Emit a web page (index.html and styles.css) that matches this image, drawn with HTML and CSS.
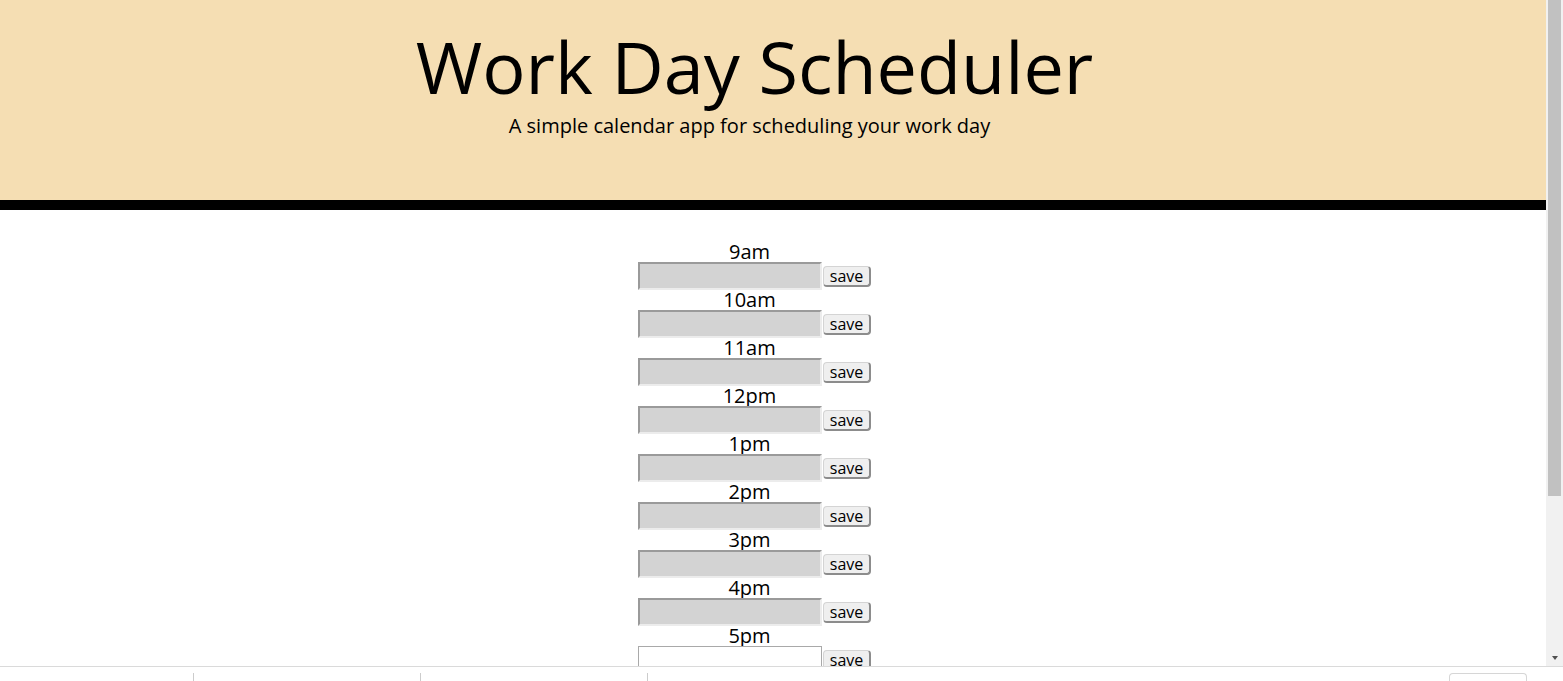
FILE: index.html
```html
<!DOCTYPE html>
<html lang="en">
<head>
<meta charset="utf-8">
<title>Work Day Scheduler</title>
<link rel="stylesheet" href="styles.css">
</head>
<body>
<div class="window">
  <div class="viewport">
    <div class="content">
      <header class="jumbotron">
        <h1 class="title">Work Day Scheduler</h1>
        <p class="lead">A simple calendar app for scheduling your work day</p>
      </header>
      <main class="schedule">
        <div class="hour-block">
          <div class="hour">9am</div>
          <div class="row"><input class="task past" type="text"><button class="save">save</button></div>
        </div>
        <div class="hour-block">
          <div class="hour">10am</div>
          <div class="row"><input class="task past" type="text"><button class="save">save</button></div>
        </div>
        <div class="hour-block">
          <div class="hour">11am</div>
          <div class="row"><input class="task past" type="text"><button class="save">save</button></div>
        </div>
        <div class="hour-block">
          <div class="hour">12pm</div>
          <div class="row"><input class="task past" type="text"><button class="save">save</button></div>
        </div>
        <div class="hour-block">
          <div class="hour">1pm</div>
          <div class="row"><input class="task past" type="text"><button class="save">save</button></div>
        </div>
        <div class="hour-block">
          <div class="hour">2pm</div>
          <div class="row"><input class="task past" type="text"><button class="save">save</button></div>
        </div>
        <div class="hour-block">
          <div class="hour">3pm</div>
          <div class="row"><input class="task past" type="text"><button class="save">save</button></div>
        </div>
        <div class="hour-block">
          <div class="hour">4pm</div>
          <div class="row"><input class="task past" type="text"><button class="save">save</button></div>
        </div>
        <div class="hour-block">
          <div class="hour">5pm</div>
          <div class="row"><input class="task future" type="text"><button class="save">save</button></div>
        </div>
      </main>
    </div>
    <div class="scrollbar">
      <div class="thumb"></div>
      <div class="track-space"></div>
      <div class="arrow-down"><span class="tri"></span></div>
    </div>
  </div>
  <div class="bottombar">
    <div class="seg seg-first"></div>
    <div class="seg"></div>
    <div class="seg"></div>
    <div class="bar-spacer"></div>
    <div class="bar-box"></div>
  </div>
</div>
</body>
</html>
```
FILE: styles.css
```css
html, body {
  margin: 0;
  padding: 0;
  height: 681px;
  overflow: hidden;
  background: #ffffff;
  font-family: "Open Sans", "Liberation Sans", sans-serif;
  color: #000;
}

.window {
  display: flex;
  flex-direction: column;
  height: 681px;
}

.viewport {
  display: flex;
  height: 666px;
  flex: none;
}

.content {
  flex: 1;
  overflow: hidden;
}

.jumbotron {
  background: #f5deb3;
  height: 200px;
  border-bottom: 10px solid #000;
  box-sizing: content-box;
  padding-right: 37px;
  text-align: center;
  display: flex;
  flex-direction: column;
  align-items: center;
}

.title {
  margin: 30px 0 0;
  font-size: 72px;
  line-height: 72px;
  font-weight: 400;
}

.lead {
  margin: 14px 0 0;
  font-size: 20px;
  line-height: 20px;
  padding-right: 10px;
}

.schedule {
  padding-top: 32px;
  padding-right: 37px;
  display: flex;
  flex-direction: column;
  align-items: center;
}

.hour-block {
  display: flex;
  flex-direction: column;
  width: 233px;
}

.hour {
  height: 20px;
  font-size: 20px;
  line-height: 20px;
  text-align: center;
  padding-right: 10px;
}

.row {
  display: flex;
  align-items: flex-start;
  height: 28px;
}

.task {
  box-sizing: border-box;
  width: 184px;
  height: 28px;
  margin: 0;
  padding: 1px 2px;
  font-family: inherit;
  font-size: 16px;
}

.task.past {
  background: #d3d3d3;
  border: 2px solid;
  border-color: #9a9a9a #ececec #ececec #9a9a9a;
}

.task.future {
  background: #ffffff;
  border: 1px solid #a9a9a9;
}

.save {
  box-sizing: border-box;
  width: 48px;
  height: 21px;
  margin: 4px 0 0 1px;
  padding: 0;
  font-family: "Open Sans", "Liberation Sans", sans-serif;
  font-size: 16px;
  line-height: 17px;
  color: #000;
  background: #efefef;
  border-style: solid;
  border-width: 1px 2px 2px 1px;
  border-color: #d4d4d4 #8c8c8c #8c8c8c #d4d4d4;
  border-radius: 4px;
}

.scrollbar {
  width: 17px;
  flex: none;
  background: #f1f1f1;
  display: flex;
  flex-direction: column;
}

.thumb {
  height: 496px;
  margin: 0 2px;
  background: #c1c1c1;
}

.track-space {
  flex: 1;
}

.arrow-down {
  height: 17px;
  display: flex;
  justify-content: center;
  align-items: center;
}

.tri {
  width: 0;
  height: 0;
  border-left: 3.5px solid transparent;
  border-right: 3.5px solid transparent;
  border-top: 4px solid #505050;
  margin-left: 1px;
}

.bottombar {
  height: 14px;
  border-top: 1px solid #dadada;
  display: flex;
  align-items: flex-end;
  background: #fff;
}

.seg {
  width: 226px;
  height: 8px;
  border-right: 1px solid #cccccc;
  flex: none;
}

.seg-first {
  width: 193px;
}

.bar-spacer {
  flex: 1;
}

.bar-box {
  width: 76px;
  height: 7px;
  margin-right: 36px;
  border: 1px solid #d6d6d6;
  border-bottom: none;
  border-radius: 4px 4px 0 0;
}
```
